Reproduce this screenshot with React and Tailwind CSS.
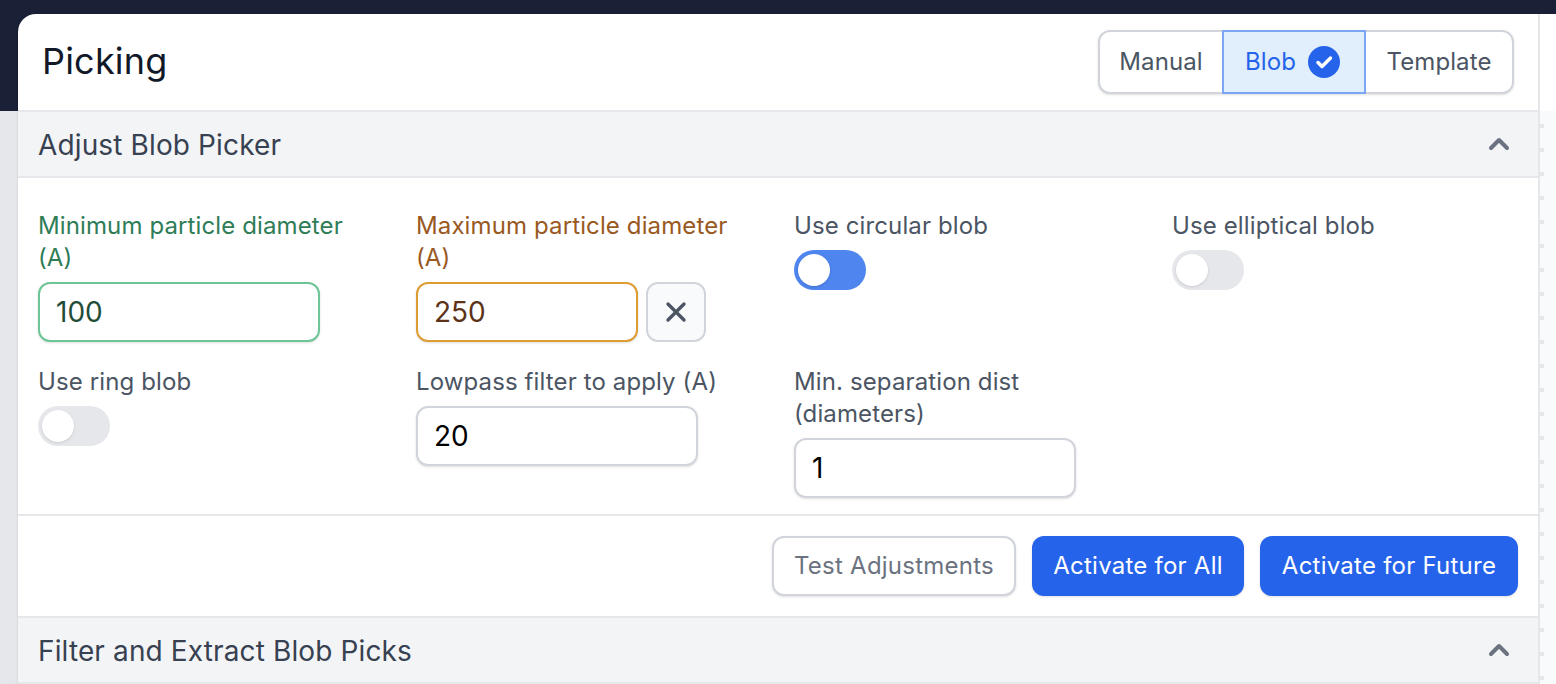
import React from 'react';
import { ChevronUp, X } from 'lucide-react';

const Toggle = ({ on }) => (
  <div className={`mt-2 w-[72px] h-10 rounded-full p-1 flex ${on ? 'bg-[#4f85ee]' : 'bg-[#e5e7eb]'}`}>
    <div className="w-8 h-8 rounded-full bg-white shadow-sm" />
  </div>
);

const Label = ({ children, className = 'text-[#4b5563]' }) => (
  <div className={`text-[24px] leading-8 tracking-[0.12px] ${className}`}>{children}</div>
);

const Input = ({ value, className = 'border-[#d1d5db] text-black', width = 'w-[282px]' }) => (
  <div className={`h-[60px] ${width} rounded-xl border-2 bg-white px-4 flex items-center text-[28px] shadow-sm ${className}`}>
    {value}
  </div>
);

const SectionHeader = ({ title, className = '' }) => (
  <div className={`flex items-center justify-between bg-[#f3f4f6] border-t-2 border-b-2 border-[#e5e7eb] pl-5 pr-[23px] ${className}`}>
    <span className="text-[28px] tracking-[0.13px] text-[#374151] mt-px">{title}</span>
    <ChevronUp className="w-8 h-8 text-[#6b7280]" strokeWidth={3} />
  </div>
);

const Dashes = () => (
  <div className="flex-1 border-l-2 border-[#e5e7eb] bg-[#f9fafb] flex flex-col gap-5 pt-[13px]">
    {Array.from({ length: 24 }).map((_, i) => (
      <div key={i} className="w-1 h-1 bg-[#e5e7eb] shrink-0" />
    ))}
  </div>
);

export default function App() {
  return (
    <div className="h-[684px] w-[1556px] overflow-hidden flex flex-col bg-[#1a2035] font-['Inter',sans-serif]">
      <div className="h-[14px] shrink-0" />
      <div className="flex flex-1 min-h-0">
        {/* left gutter */}
        <div className="w-[18px] shrink-0 flex flex-col">
          <div className="h-[97px] shrink-0" />
          <div className="flex-1 bg-[#e5e7eb]" />
        </div>

        {/* panel */}
        <div className="w-[1520px] shrink-0 bg-white rounded-tl-[18px] flex flex-col shadow-sm">
          <div className="h-[96px] shrink-0 flex items-center justify-between pl-6 pr-6">
            <h1 className="text-[36px] font-normal tracking-[0.2px] text-[#111827] leading-10 -mt-0.5">Picking</h1>
            <div className="flex h-16 rounded-xl border-2 border-[#d1d5db] shadow-sm text-[24px] tracking-[0.1px] text-[#4b5563] bg-white">
              <div className="w-[122px] flex items-center justify-center">Manual</div>
              <div className="w-[144px] -my-[2px] border-2 border-[#7aa7f3] bg-[#e1eefb] text-[#2563eb] flex items-center pl-[21px] gap-[12px]">
                Blob
                <svg viewBox="0 0 32 32" className="w-8 h-8">
                  <circle cx="16" cy="16" r="16" fill="#2563eb" />
                  <path d="M10 16.5l4 4 8.500-8.500" fill="none" stroke="#fff" strokeWidth="3.500" strokeLinecap="round" strokeLinejoin="round" />
                </svg>
              </div>
              <div className="w-[146px] flex items-center justify-center">Template</div>
            </div>
          </div>

          <SectionHeader title="Adjust Blob Picker" className="h-[68px] shrink-0" />

          <div className="h-[336px] shrink-0 pl-5 pt-8 grid grid-cols-[378px_378px_378px_378px] content-start gap-y-6">
            <div>
              <div className="w-[330px]">
                <Label className="text-[#2f7d57]">Minimum particle diameter (A)</Label>
              </div>
              <div className="mt-2">
                <Input value="100" className="border-[#6cc596] text-[#1f4d38]" />
              </div>
            </div>
            <div>
              <div className="w-[330px]">
                <Label className="text-[#99591f]">Maximum particle diameter (A)</Label>
              </div>
              <div className="mt-2 flex gap-2">
                <Input value="250" width="w-[222px]" className="border-[#dd9d33] text-[#5c3218]" />
                <div className="w-[60px] h-[60px] rounded-xl border-2 border-[#d1d5db] bg-[#f9fafb] flex items-center justify-center">
                  <X className="w-8 h-8 text-[#4b5563]" strokeWidth={2.5} />
                </div>
              </div>
            </div>
            <div>
              <Label>Use circular blob</Label>
              <Toggle on />
            </div>
            <div>
              <Label>Use elliptical blob</Label>
              <Toggle />
            </div>
            <div>
              <Label>Use ring blob</Label>
              <Toggle />
            </div>
            <div>
              <Label>Lowpass filter to apply (A)</Label>
              <div className="mt-2">
                <Input value="20" />
              </div>
            </div>
            <div className="col-span-2">
              <div className="w-[300px]">
                <Label>Min. separation dist (diameters)</Label>
              </div>
              <div className="mt-2">
                <Input value="1" />
              </div>
            </div>
          </div>

          <div className="h-[102px] shrink-0 border-t-2 border-[#e5e7eb] flex items-start justify-end gap-4 pt-5 pr-5 text-[24px] tracking-[0.24px]">
            <div className="h-[60px] w-[244px] rounded-xl border-2 border-[#d1d5db] text-[#6b7280] bg-white flex items-center justify-center shadow-sm">Test Adjustments</div>
            <div className="h-[60px] w-[212px] rounded-xl bg-[#2563eb] text-white flex items-center justify-center shadow-sm">Activate for All</div>
            <div className="h-[60px] w-[258px] rounded-xl bg-[#2563eb] text-white flex items-center justify-center shadow-sm">Activate for Future</div>
          </div>

          <SectionHeader title="Filter and Extract Blob Picks" className="h-[68px] shrink-0" />
        </div>

        {/* right gutter */}
        <div className="w-[18px] shrink-0 flex flex-col">
          <div className="h-[97px] shrink-0 bg-white border-l-2 border-[#e5e7eb]" />
          <Dashes />
        </div>
      </div>
    </div>
  );
}
